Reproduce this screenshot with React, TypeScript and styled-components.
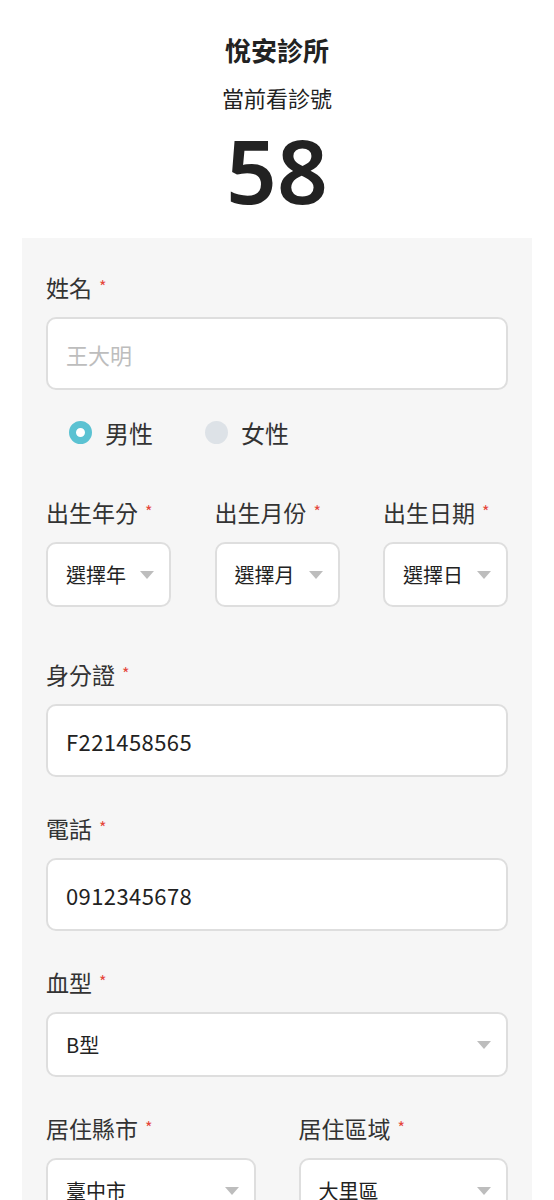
import styled, { createGlobalStyle } from "styled-components";

const GlobalStyle = createGlobalStyle`
  body {
    margin: 0;
    background: #ffffff;
    font-family: "Noto Sans CJK TC", "Noto Sans", sans-serif;
    color: #333333;
  }
`;

const Page = styled.div`
  width: 554px;
`;

const Header = styled.div`
  display: flex;
  flex-direction: column;
  align-items: center;
  padding-top: 33px;
`;

const Clinic = styled.div`
  font-size: 26px;
  font-weight: 700;
  line-height: 34px;
  color: #222;
`;

const SubTitle = styled.div`
  margin-top: 15px;
  font-size: 22px;
  line-height: 30px;
  color: #222;
`;

const Number = styled.div`
  margin-top: 10px;
  font-family: "Noto Sans", sans-serif;
  font-size: 89px;
  font-weight: 600;
  line-height: 96px;
  color: #222;
`;

const Panel = styled.div`
  margin: 20px 22px 0;
  background: #f6f6f6;
  padding: 34px 24px 40px;
`;

const Field = styled.div<{ $mb?: number }>`
  display: flex;
  flex-direction: column;
  margin-bottom: ${(p) => (p.$mb ?? 36)}px;
`;

const Label = styled.div`
  font-size: 23px;
  line-height: 30px;
  height: 30px;
  color: #333;
  margin-bottom: 15px;
  white-space: nowrap;
`;

const Star = styled.span`
  color: #e5463b;
  font-size: 16px;
  line-height: 1;
  margin-left: 7px;
  vertical-align: 4px;
`;

const TextBox = styled.div<{ $placeholder?: boolean }>`
  height: 73px;
  box-sizing: border-box;
  border: 2px solid #dedede;
  border-radius: 10px;
  background: #fff;
  padding: 0 18px;
  display: flex;
  align-items: center;
  font-size: 22px;
  letter-spacing: ${(p) => (p.$placeholder ? 0 : 0.4)}px;
  color: ${(p) => (p.$placeholder ? "#bdbdbd" : "#222")};
`;

const SelectBox = styled.div<{ $full?: boolean }>`
  height: 65px;
  box-sizing: border-box;
  border: 2px solid #dedede;
  border-radius: 10px;
  background: #fff;
  padding: 0 15px 0 18px;
  display: flex;
  align-items: center;
  justify-content: space-between;
  gap: 14px;
  font-size: 20px;
  color: #222;
  width: ${(p) => (p.$full ? "100%" : "auto")};
`;

const Caret = styled.span`
  width: 0;
  height: 0;
  border-left: 7.5px solid transparent;
  border-right: 7.5px solid transparent;
  border-top: 8px solid #bdbdbd;
  flex-shrink: 0;
`;

const RadioRow = styled.div`
  display: flex;
  align-items: center;
  height: 30px;
  margin: 27px 0 50px;
  padding-left: 23px;
  gap: 52px;
`;

const RadioOption = styled.div`
  display: flex;
  align-items: center;
  gap: 13px;
  font-size: 24px;
  color: #333;
`;

const Dot = styled.span<{ $on?: boolean }>`
  width: 23px;
  height: 23px;
  border-radius: 50%;
  box-sizing: border-box;
  background: ${(p) => (p.$on ? "#fff" : "#dde2e7")};
  border: ${(p) => (p.$on ? "7.5px solid #5bc2d2" : "none")};
`;

const Row = styled.div<{ $spread?: boolean; $mb?: number }>`
  display: flex;
  justify-content: space-between;
  gap: 43px;
  margin-bottom: ${(p) => (p.$mb ?? 36)}px;
  & > div {
    flex: ${(p) => (p.$spread ? "1 1 0" : "0 0 auto")};
    margin-bottom: 0;
  }
`;

const Req = ({ text }: { text: string }) => (
  <Label>
    {text}
    <Star>*</Star>
  </Label>
);

const App = () => {
  return (
    <Page>
      <GlobalStyle />
      <Header>
        <Clinic>悅安診所</Clinic>
        <SubTitle>當前看診號</SubTitle>
        <Number>58</Number>
      </Header>
      <Panel>
        <Field $mb={0}>
          <Req text="姓名" />
          <TextBox $placeholder>王大明</TextBox>
        </Field>
        <RadioRow>
          <RadioOption>
            <Dot $on />
            男性
          </RadioOption>
          <RadioOption>
            <Dot />
            女性
          </RadioOption>
        </RadioRow>
        <Row $mb={52}>
          <Field>
            <Req text="出生年分" />
            <SelectBox>
              選擇年
              <Caret />
            </SelectBox>
          </Field>
          <Field>
            <Req text="出生月份" />
            <SelectBox>
              選擇月
              <Caret />
            </SelectBox>
          </Field>
          <Field>
            <Req text="出生日期" />
            <SelectBox>
              選擇日
              <Caret />
            </SelectBox>
          </Field>
        </Row>
        <Field>
          <Req text="身分證" />
          <TextBox>F221458565</TextBox>
        </Field>
        <Field>
          <Req text="電話" />
          <TextBox>0912345678</TextBox>
        </Field>
        <Field>
          <Req text="血型" />
          <SelectBox $full>
            B型
            <Caret />
          </SelectBox>
        </Field>
        <Row $spread>
          <Field>
            <Req text="居住縣市" />
            <SelectBox $full>
              臺中市
              <Caret />
            </SelectBox>
          </Field>
          <Field>
            <Req text="居住區域" />
            <SelectBox $full>
              大里區
              <Caret />
            </SelectBox>
          </Field>
        </Row>
      </Panel>
    </Page>
  );
};

export default App;
